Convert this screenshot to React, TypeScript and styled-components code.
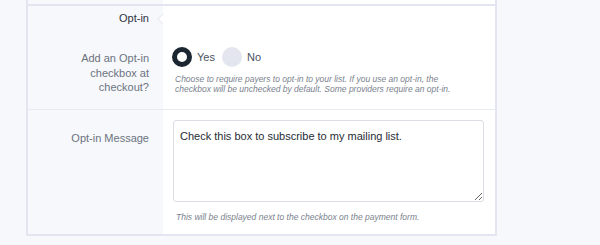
import styled, { createGlobalStyle } from 'styled-components'

const GlobalStyle = createGlobalStyle`
  html, body {
    margin: 0;
    padding: 0;
    background: #f7f8fb;
    font-family: 'Helvetica Neue', 'Liberation Sans', Arial, sans-serif;
  }
`

const Panel = styled.div`
  width: 467px;
  margin-left: 26px;
  border: 2px solid #e3e5f0;
  border-top: none;
  background: #fff;
`

const Row = styled.div<{ $divider?: 'thick' | 'thin' }>`
  display: grid;
  grid-template-columns: 135px 332px;
  border-top: ${(p) =>
    p.$divider === 'thick' ? '2px solid #e3e5f0' : p.$divider === 'thin' ? '1px solid #e8eaf1' : 'none'};
`

const Label = styled.div<{ $pad: number; $strong?: boolean }>`
  background: #f7f8fb;
  padding: ${(p) => p.$pad}px 14px 0 0;
  text-align: right;
  font-size: 11px;
  line-height: 14.5px;
  color: ${(p) => (p.$strong ? '#2c3440' : '#6b7380')};
`

const Content = styled.div<{ $pad: string; $height?: number; $notch?: boolean }>`
  position: relative;
  padding: ${(p) => p.$pad};
  ${(p) => (p.$height !== undefined ? `height: ${p.$height}px;` : '')}

  ${(p) =>
    p.$notch &&
    `
    &::before {
      content: '';
      position: absolute;
      left: -4px;
      top: 9px;
      width: 7px;
      height: 7px;
      background: #fff;
      border-left: 1px solid #e6e8f0;
      border-bottom: 1px solid #e6e8f0;
      transform: rotate(45deg);
    }
  `}
`

const RadioGroup = styled.div`
  display: flex;
  align-items: center;
  height: 20px;
`

const RadioOption = styled.label`
  display: flex;
  align-items: center;
  gap: 5px;
  margin-right: 7px;
  font-size: 11px;
  color: #4a525e;
`

const Dot = styled.span<{ $checked?: boolean }>`
  box-sizing: border-box;
  width: 20px;
  height: 20px;
  border-radius: 50%;
  background: ${(p) => (p.$checked ? '#fff' : '#e3e6ef')};
  border: ${(p) => (p.$checked ? '5.5px solid #1b2631' : 'none')};
`

const Help = styled.p<{ $top: number }>`
  margin: ${(p) => p.$top}px 0 0 3px;
  font-size: 8.5px;
  line-height: 10px;
  font-style: italic;
  color: #7a828e;
`

const MessageBox = styled.textarea`
  display: block;
  box-sizing: border-box;
  width: 311px;
  height: 82px;
  margin: 0;
  padding: 8px 6px;
  border: 1px solid #dcdee5;
  border-radius: 3px;
  font-family: inherit;
  font-size: 11px;
  line-height: 14px;
  color: #262c35;
  outline: none;
`

export default function App() {
  return (
    <>
      <GlobalStyle />
      <Panel>
        {/* tail of the section above */}
        <Row>
          <Label $pad={0} />
          <Content $pad="0" $height={4} />
        </Row>

        <Row $divider="thick">
          <Label $pad={5} $strong>
            Opt-in
          </Label>
          <Content $pad="0" $height={26} $notch />
        </Row>

        <Row>
          <Label $pad={19}>
            Add an Opt-in
            <br />
            checkbox at
            <br />
            checkout?
          </Label>
          <Content $pad="15px 10px 15px 9px">
            <RadioGroup>
              <RadioOption>
                <Dot $checked />
                Yes
              </RadioOption>
              <RadioOption>
                <Dot />
                No
              </RadioOption>
            </RadioGroup>
            <Help $top={7}>
              Choose to require payers to opt-in to your list. If you use an opt-in, the
              <br />
              checkbox will be unchecked by default. Some providers require an opt-in.
            </Help>
          </Content>
        </Row>

        <Row $divider="thin">
          <Label $pad={21}>Opt-in Message</Label>
          <Content $pad="10px 11px 12px 10px">
            <MessageBox defaultValue="Check this box to subscribe to my mailing list." />
            <Help $top={10}>This will be displayed next to the checkbox on the payment form.</Help>
          </Content>
        </Row>
      </Panel>
    </>
  )
}
